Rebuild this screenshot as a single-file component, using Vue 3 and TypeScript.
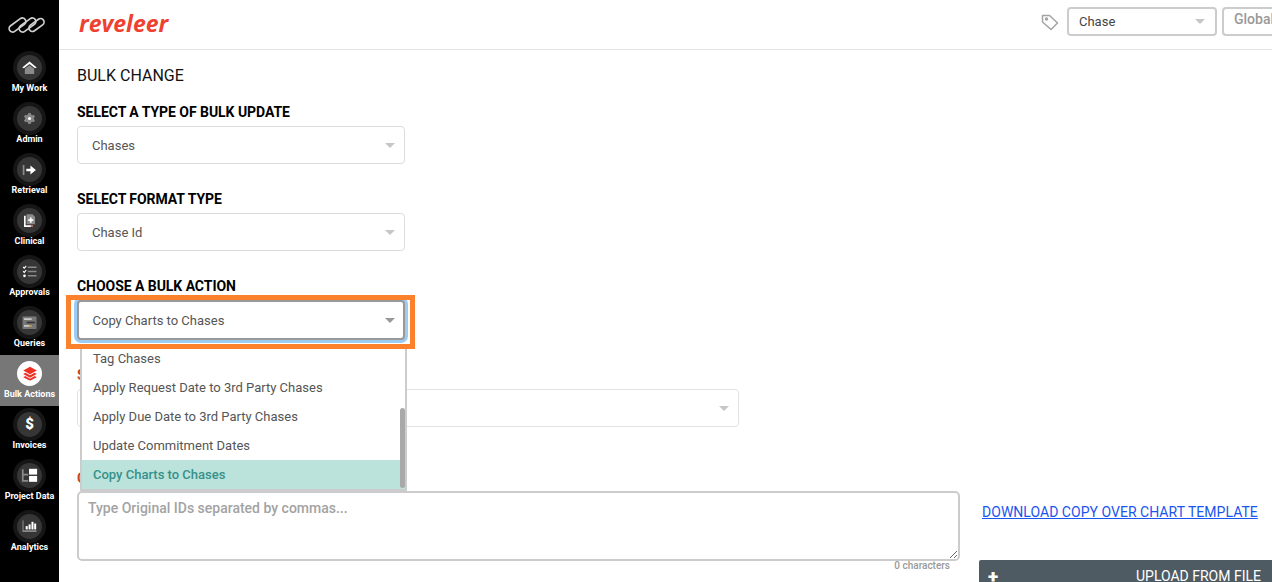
<script setup lang="ts">
const navItems = [
  { label: 'My Work', icon: 'home' },
  { label: 'Admin', icon: 'gear' },
  { label: 'Retrieval', icon: 'retrieval' },
  { label: 'Clinical', icon: 'clinical' },
  { label: 'Approvals', icon: 'approvals' },
  { label: 'Queries', icon: 'queries' },
  { label: 'Bulk Actions', icon: 'layers', active: true },
  { label: 'Invoices', icon: 'dollar' },
  { label: 'Project Data', icon: 'project' },
  { label: 'Analytics', icon: 'analytics' },
]

const options = [
  'Tag Chases',
  'Apply Request Date to 3rd Party Chases',
  'Apply Due Date to 3rd Party Chases',
  'Update Commitment Dates',
  'Copy Charts to Chases',
]
</script>

<template>
  <div class="app">
    <aside class="sidebar">
      <div class="brand">
        <svg width="38" height="18" viewBox="0 0 38 18" fill="none" stroke="#cfcfcf" stroke-width="1.7">
          <rect x="0" y="5.5" width="19" height="7" rx="3.5" transform="rotate(-36 9.5 9)" />
          <rect x="10" y="5.5" width="19" height="7" rx="3.5" transform="rotate(-36 19.5 9)" />
          <rect x="20" y="5.5" width="17" height="7" rx="3.5" transform="rotate(-36 28.5 9)" />
        </svg>
      </div>
      <nav class="nav">
        <div v-for="item in navItems" :key="item.label" class="nav-item" :class="{ 'nav-item--active': item.active }">
          <span class="nav-ring">
            <span class="nav-disc">
              <svg v-if="item.icon === 'home'" width="19" height="17" viewBox="0 0 19 17">
                <path d="M1 8.5 L9.5 1.5 L18 8.5 L16 9.5 L9.5 4.5 L3 9.5Z" fill="#fff" />
                <path d="M4 10 L9.5 5.8 L15 10 V16 H4Z" fill="#8a8a8a" />
              </svg>
              <svg v-else-if="item.icon === 'gear'" width="15" height="15" viewBox="0 0 15 15">
                <path d="M6 1h3l.4 1.8 1.5.8 1.7-.6 1.4 2.5-1.3 1.2v1.6l1.3 1.2-1.4 2.5-1.7-.6-1.5.8L9 14H6l-.4-1.8-1.5-.8-1.7.6L1 9.5l1.3-1.2V6.7L1 5.5l1.4-2.5 1.7.6 1.5-.8Z" fill="#858585" />
                <circle cx="7.5" cy="7.5" r="1.8" fill="#fff" />
              </svg>
              <svg v-else-if="item.icon === 'retrieval'" width="17" height="14" viewBox="0 0 15 13">
                <rect x="0" y="1" width="2" height="11" fill="#8a8a8a" />
                <path d="M4 5h4.5V1.5L14.5 6.5 8.5 11.5V8H4Z" fill="#fff" />
              </svg>
              <svg v-else-if="item.icon === 'clinical'" width="15" height="17" viewBox="0 0 15 17">
                <path d="M1 3h2v11h8v2H1Z" fill="#fff" />
                <path d="M4 1h7l3 3v9H4Z" fill="#8a8a8a" />
                <path d="M8 5h2v2h2v2h-2v2H8V9H6V7h2Z" fill="#fff" />
                <rect x="9" y="14" width="2" height="2" fill="#ef4130" />
              </svg>
              <svg v-else-if="item.icon === 'approvals'" width="17" height="15" viewBox="0 0 17 15" fill="none">
                <path d="M1 2.2 2.4 3.6 4.6 1M1 7.2 2.4 8.6 4.6 6" stroke="#fff" stroke-width="1.3" />
                <circle cx="2.6" cy="12.6" r="1.6" fill="#fff" />
                <path d="M6.5 2.5H17M6.5 7.5H17M6.5 12.5H17" stroke="#8a8a8a" stroke-width="2" />
              </svg>
              <svg v-else-if="item.icon === 'queries'" width="17" height="15" viewBox="0 0 17 15">
                <rect x="0" y="0" width="17" height="15" rx="1" fill="#777" />
                <rect x="2" y="2.5" width="9" height="2" fill="#ccc" />
                <rect x="5" y="6.5" width="10" height="2" fill="#333" />
                <rect x="2" y="10.5" width="6" height="2" fill="#ccc" />
                <rect x="8" y="10.5" width="3" height="2" fill="#d9a24a" />
              </svg>
              <svg v-else-if="item.icon === 'layers'" width="18" height="17" viewBox="0 0 18 17">
                <path d="M9 0.5 17 5 9 9.5 1 5Z" fill="#ef3124" />
                <path d="M3.5 7.5 9 10.6 14.5 7.5 17 9 9 13.5 1 9Z" fill="#ef3124" />
                <path d="M3.5 11.5 9 14.6 14.5 11.5 17 13 9 17 1 13Z" fill="#ef3124" />
              </svg>
              <span v-else-if="item.icon === 'dollar'" class="dollar">$</span>
              <svg v-else-if="item.icon === 'project'" width="19" height="17" viewBox="0 0 17 16">
                <path d="M0 1h2v5h5v2H2v5h5v2H0Z" fill="#8a8a8a" />
                <rect x="8" y="0.5" width="9" height="6.5" fill="#fff" />
                <rect x="8" y="8.5" width="9" height="6.5" fill="#fff" />
              </svg>
              <svg v-else width="17" height="15" viewBox="0 0 17 15">
                <path d="M0 0h1.5v12H17v2H0Z" fill="#8a8a8a" />
                <rect x="4" y="7" width="2.4" height="4" fill="#fff" />
                <rect x="7.4" y="5" width="2.4" height="6" fill="#fff" />
                <rect x="10.8" y="2" width="2.4" height="9" fill="#fff" />
                <rect x="14" y="4" width="2.4" height="7" fill="#fff" />
              </svg>
            </span>
          </span>
          <span class="nav-label">{{ item.label }}</span>
        </div>
      </nav>
    </aside>

    <div class="content">
      <header class="topbar">
        <span class="logo">reveleer</span>
        <div class="topbar-tools">
          <svg class="tag" width="18" height="18" viewBox="0 0 18 18" fill="none" stroke="#a3a3a3" stroke-width="1.5">
            <path d="M1.5 2.5 H8.5 L16.5 10 L10 16.5 L1.5 9Z" stroke-linejoin="round" />
            <circle cx="5.5" cy="6" r="1" />
          </svg>
          <div class="top-select">
            <span>Chase</span>
            <i class="caret"></i>
          </div>
          <div class="top-input">Global</div>
        </div>
      </header>

      <main class="main">
        <h1 class="title">BULK CHANGE</h1>

        <section class="field">
          <label class="label">SELECT A TYPE OF BULK UPDATE</label>
          <div class="select"><span>Chases</span><i class="caret"></i></div>
        </section>

        <section class="field">
          <label class="label">SELECT FORMAT TYPE</label>
          <div class="select"><span>Chase Id</span><i class="caret"></i></div>
        </section>

        <section class="field field--open">
          <label class="label">CHOOSE A BULK ACTION</label>
          <div class="select select--focus">
            <span>Copy Charts to Chases</span><i class="caret caret--dark"></i>
          </div>
          <div class="highlight"></div>
          <ul class="menu">
            <li v-for="opt in options" :key="opt" class="menu-item" :class="{ 'menu-item--on': opt === 'Copy Charts to Chases' }">{{ opt }}</li>
            <li class="scrollbar"></li>
          </ul>
        </section>

        <section class="field field--wide">
          <label class="label label--red">SELECT</label>
          <div class="select select--wide"><i class="caret"></i></div>
        </section>

        <section class="bottom">
          <div class="ids">
            <label class="label label--red">ORIGINAL IDS</label>
            <textarea class="textarea" placeholder="Type Original IDs separated by commas..."></textarea>
            <div class="count">0 characters</div>
          </div>
          <div class="side">
            <a class="download" href="#">DOWNLOAD COPY OVER CHART TEMPLATE</a>
            <div class="upload"><span class="plus">+</span><span>UPLOAD FROM FILE</span></div>
          </div>
        </section>
      </main>
    </div>
  </div>
</template>

<style>
html, body { margin: 0; height: 100%; overflow: hidden; background: #fff; }
</style>

<style scoped>
.app {
  display: flex;
  width: 1272px;
  height: 582px;
  overflow: hidden;
  font-family: Roboto, "Liberation Sans", sans-serif;
  color: #333;
}
.sidebar {
  width: 59px;
  flex: none;
  background: #000;
  display: flex;
  flex-direction: column;
}
.brand {
  height: 49px;
  display: flex;
  align-items: center;
  justify-content: center;
  box-sizing: border-box;
  padding: 0 5px 0 0;
}
.nav-item {
  height: 51px;
  display: flex;
  flex-direction: column;
  align-items: center;
  padding-top: 2px;
  box-sizing: border-box;
}
.nav-item--active { background: #777; }
.nav-ring {
  width: 33px;
  height: 33px;
  border-radius: 50%;
  background: #161616;
  display: flex;
  align-items: center;
  justify-content: center;
}
.nav-disc {
  width: 25px;
  height: 25px;
  border-radius: 50%;
  background: #363636;
  display: flex;
  align-items: center;
  justify-content: center;
  overflow: hidden;
}
.nav-item--active .nav-ring { background: #777; }
.nav-item--active .nav-disc { background: #fff; }
.nav-item svg { flex: none; transform: scale(0.85); }
.dollar { color: #fff; font-weight: 900; font-size: 15px; line-height: 1; }
.nav-label {
  color: #fff;
  font-size: 9px;
  font-weight: 700;
  line-height: 12px;
  white-space: nowrap;
  margin-top: -2px;
}
.content { flex: 1; min-width: 0; display: flex; flex-direction: column; }
.topbar {
  height: 50px;
  box-sizing: border-box;
  border-bottom: 1px solid #e4e4e4;
  display: flex;
  align-items: center;
  justify-content: space-between;
  padding-left: 20px;
  flex: none;
}
.logo {
  color: #ef4130;
  font-family: "Open Sans", Roboto, sans-serif;
  font-size: 23px;
  font-weight: 700;
  font-style: italic;
  margin-top: -3px;
}
.topbar-tools {
  display: flex;
  align-items: center;
  width: 231px;
  overflow: hidden;
  margin-top: -6px;
}
.tag { flex: none; margin-right: 8px; }
.main { flex: 1; padding: 16px 0 0 18px; min-height: 0; }
.title { margin: 0 0 17px; font-size: 16px; font-weight: 400; line-height: 20px; color: #111; }
.field { height: 87px; position: relative; }
.field--open { height: 89px; }
.field--wide { height: 103px; }
.label {
  display: block;
  font-size: 14px;
  font-weight: 700;
  line-height: 18px;
  letter-spacing: -0.05px;
  color: #000;
  margin-bottom: 5px;
}
.label--red { color: #c8421f; }
.select {
  width: 328px;
  height: 38px;
  box-sizing: border-box;
  border: 1px solid #dcdcdc;
  border-radius: 4px;
  background: #fff;
  display: flex;
  align-items: center;
  justify-content: space-between;
  padding: 0 9px 0 14px;
  font-size: 13px;
  color: #555;
}
.select--focus {
  height: 40px;
  margin-top: 1px;
  border: 2px solid #999;
  padding: 0 8px 0 13.5px;
  box-shadow: 0 0 0 3px #9ccbf3;
}
.select--wide { width: 662px; justify-content: flex-end; border-color: #e2e2e2; }
.caret {
  width: 0;
  height: 0;
  border-left: 5px solid transparent;
  border-right: 5px solid transparent;
  border-top: 5px solid #c6c6c6;
}
.caret--dark { border-top-color: #999; }
.highlight {
  position: absolute;
  left: -11px;
  top: 18px;
  width: 349px;
  height: 54px;
  box-sizing: border-box;
  border: 5px solid #fb812d;
  pointer-events: none;
  z-index: 3;
}
.menu {
  position: absolute;
  z-index: 2;
  left: 3px;
  top: 67px;
  width: 327px;
  height: 147px;
  margin: 0;
  padding: 0;
  list-style: none;
  box-sizing: border-box;
  background: #fff;
  border: 2px solid #ccc;
  border-top: 0;
  overflow: hidden;
  font-size: 13px;
}
.menu-item {
  height: 29px;
  line-height: 29px;
  padding-left: 11px;
  color: #555;
}
.menu-item--on { background: #bce3db; color: #36908a; font-weight: 500; }
.scrollbar {
  position: absolute;
  right: 0;
  top: 64px;
  width: 5px;
  bottom: 1px;
  background: #a9a9a9;
  border-radius: 3px;
}
.bottom { display: flex; }
.ids { width: 883px; flex: none; }
.ids .label { margin-bottom: 4px; }
.textarea {
  display: block;
  width: 883px;
  height: 70px;
  box-sizing: border-box;
  border: 2px solid #ccc;
  border-radius: 5px;
  padding: 7px 9px;
  font-family: inherit;
  font-size: 14px;
  font-weight: 500;
  color: #333;
  outline: none;
}
.textarea::placeholder { color: #a3a3a3; }
.count { text-align: right; font-size: 10px; font-weight: 500; color: #999; margin: 0 10px 0 0; line-height: 10px; }
.side { margin-left: 22px; flex: none; padding-top: 35px; width: 290px; }
.download { color: #1a55f0; font-size: 14px; letter-spacing: 0.03px; line-height: 17px; display: block; white-space: nowrap; }
.upload {
  margin: 39px 0 0 -3px;
  width: 293px;
  height: 32px;
  background: #4f5b63;
  border-radius: 2px 0 0 0;
  color: #fff;
  display: flex;
  justify-content: space-between;
  align-items: flex-start;
  font-size: 14px;
  padding: 8px 11px 0 9px;
  box-sizing: border-box;
  line-height: 17px;
}
.plus { font-weight: 900; font-size: 19px; }
.top-select {
  width: 150px;
  height: 29px;
  flex: none;
  box-sizing: border-box;
  border: 2px solid #ccc;
  border-radius: 4px;
  display: flex;
  align-items: center;
  justify-content: space-between;
  padding: 0 10px;
  font-size: 13px;
  color: #444;
}
.top-input {
  height: 29px;
  flex: none;
  width: 80px;
  margin-left: 5px;
  box-sizing: border-box;
  border: 2px solid #ccc;
  border-right: 0;
  border-radius: 4px 0 0 4px;
  padding: 2px 10px;
  font-size: 14px;
  font-weight: 500;
  color: #999;
}
</style>
